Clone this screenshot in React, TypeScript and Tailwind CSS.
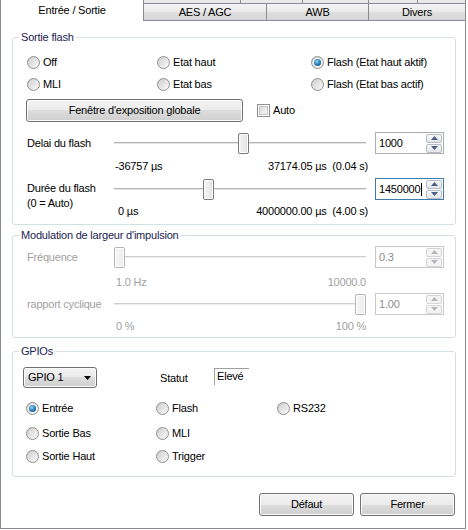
import React from 'react';

const btnBg =
  'bg-[linear-gradient(#f2f2f2,#ebebeb_50%,#dddddd_50%,#cfcfcf)] shadow-[inset_0_0_0_1px_#fbfbfb]';

function Radio({ label, checked = false }: { label: string; checked?: boolean }) {
  return (
    <div className="flex items-center h-[13px]">
      <span className="w-[13px] h-[13px] shrink-0 rounded-full border border-[#8e8f8f] bg-[linear-gradient(135deg,#cdcdcd,#fbfbfb)] flex items-center justify-center">
        {checked && (
          <span className="w-[7px] h-[7px] rounded-full bg-[radial-gradient(circle_at_40%_35%,#8ad2f7,#1d6fa8_60%,#0b4d80)] shadow-[0_0_0_1px_#f6f6f6]" />
        )}
      </span>
      <span className="ml-[3px] whitespace-nowrap">{label}</span>
    </div>
  );
}

function Group({ title, className = '', children }: { title: string; className?: string; children: React.ReactNode }) {
  return (
    <fieldset className={`border border-[#d5dfe5] rounded-[3px] ${className}`}>
      <legend className="ml-[6px] px-[2px] text-[#1b2350]">{title}</legend>
      {children}
    </fieldset>
  );
}

function Slider({ pos, disabled = false }: { pos: string; disabled?: boolean }) {
  return (
    <div className="relative w-[252px] h-[22px] flex items-center">
      <div className={`w-full h-[2px] border-t ${disabled ? 'border-[#cfcfcf] bg-[#eeeeee]' : 'border-[#b4b4b4] bg-[#e4e4e4]'}`} />
      <div
        className={`absolute top-[1px] ${pos} w-[11px] h-[21px] rounded-[2px] border ${
          disabled
            ? 'border-[#b5b5b5] bg-[linear-gradient(90deg,#f7f7f7,#ececec)]'
            : 'border-[#7a7a7a] bg-[linear-gradient(90deg,#f6f6f6,#e2e2e2)]'
        } shadow-[inset_0_0_0_1px_#ffffff]`}
      />
    </div>
  );
}

function SpinBtn({ up, disabled }: { up?: boolean; disabled?: boolean }) {
  return (
    <div
      className={`w-[16px] h-[9px] rounded-[2px] border flex items-center justify-center ${
        disabled ? 'border-[#d2d5d9] bg-[#f4f4f4]' : 'border-[#b6bcc6] bg-[linear-gradient(#f7f7f7,#e3e5e8)]'
      }`}
    >
      <svg width="7" height="4" viewBox="0 0 7 4">
        <path d={up ? 'M0 4h7L3.5 0z' : 'M0 0h7L3.5 4z'} fill={disabled ? '#b8b8b8' : '#4a5f85'} />
      </svg>
    </div>
  );
}

function Spin({ value, disabled = false, focused = false }: { value: string; disabled?: boolean; focused?: boolean }) {
  return (
    <div
      className={`ml-[9px] w-[69px] h-[22px] border bg-white flex items-center ${
        focused ? 'border-[#3d7bad]' : disabled ? 'border-[#c9c9c9]' : 'border-[#abadb3]'
      }`}
    >
      <span className={`flex-1 pl-[3px] flex items-center ${disabled ? 'text-[#8d8d8d]' : ''}`}>
        {value}
        {focused && <span className="inline-block w-[1px] h-[13px] bg-black ml-[1px]" />}
      </span>
      <div className="flex flex-col gap-[1px] pr-[1px]">
        <SpinBtn up disabled={disabled} />
        <SpinBtn disabled={disabled} />
      </div>
    </div>
  );
}

export default function App() {
  return (
    <div className="w-[468px] h-[530px] bg-white text-black text-[11px] leading-[13px] tracking-[-0.2px] font-['Liberation_Sans',Arial,sans-serif] overflow-hidden">
      {/* Tabs */}
      <div className="flex h-[21px]">
        <div className="w-[144px] border-x border-[#898c95] bg-white flex items-center justify-center">Entrée / Sortie</div>
        <div className="w-[322px] flex flex-col">
          <div className="flex h-[3px]">
            <div className="w-[97px] border-r border-[#898c95] bg-[#e9e9e9]" />
            <div className="w-[62px] border-r border-[#898c95] bg-[#e9e9e9]" />
            <div className="w-[66px] border-r border-[#898c95] bg-[#e9e9e9]" />
            <div className="w-[49px] border-r border-[#898c95] bg-[#e9e9e9]" />
            <div className="w-[48px] border-r border-[#898c95] bg-[#e9e9e9]" />
          </div>
          <div className="flex h-[18px] border-y border-[#898c95]">
            <div className="w-[123px] border-r border-[#898c95] bg-[linear-gradient(#f3f3f3,#ebebeb_45%,#dedede_55%,#d6d6d6)] flex items-center justify-center">AES / AGC</div>
            <div className="w-[102px] border-r border-[#898c95] bg-[linear-gradient(#f3f3f3,#ebebeb_45%,#dedede_55%,#d6d6d6)] flex items-center justify-center">AWB</div>
            <div className="w-[97px] border-r border-[#898c95] bg-[linear-gradient(#f3f3f3,#ebebeb_45%,#dedede_55%,#d6d6d6)] flex items-center justify-center">Divers</div>
          </div>
        </div>
      </div>

      {/* Page */}
      <div className="w-[466px] h-[508px] border-x border-b border-[#898c95] pt-[10px] pl-[11px] pr-[9px] flex flex-col">
        <Group title="Sortie flash">
          <div className="pl-[14px] pt-[12px] pb-[6px]">
            <div className="grid grid-cols-[130px_154px_1fr] gap-y-[9px]">
              <Radio label="Off" />
              <Radio label="Etat haut" />
              <Radio label="Flash (Etat haut aktif)" checked />
              <Radio label="MLI" />
              <Radio label="Etat bas" />
              <Radio label="Flash (Etat bas actif)" />
            </div>
            <div className="flex items-center mt-[8px]">
              <div className={`-ml-[1px] w-[217px] h-[23px] rounded-[3px] border border-[#707070] ${btnBg} flex items-center justify-center`}>
                Fenêtre d'exposition globale
              </div>
              <div className="ml-[14px] w-[13px] h-[13px] border border-[#8e8f8f] bg-white p-[1px]">
                <div className="w-full h-full border border-[#c6c6c6] bg-[linear-gradient(135deg,#d9d9d9,#f8f8f8)]" />
              </div>
              <span className="ml-[3px]">Auto</span>
            </div>

            <div className="flex mt-[10px]">
              <div className="w-[87px] h-[22px] flex items-center">Delai du flash</div>
              <div className="flex flex-col">
                <div className="flex items-center h-[22px]">
                  <Slider pos="left-[124px]" />
                  <Spin value="1000" />
                </div>
                <div className="flex justify-between w-[254px] mt-[6px] pl-[1px] whitespace-pre">
                  <span>-36757 µs</span>
                  <span>37174.05 µs  (0.04 s)</span>
                </div>
              </div>
            </div>

            <div className="flex mt-[5px]">
              <div className="w-[87px] pt-[3px] leading-[15px]">
                Durée du flash
                <br />
                (0 = Auto)
              </div>
              <div className="flex flex-col">
                <div className="flex items-center h-[22px]">
                  <Slider pos="left-[89px]" />
                  <Spin value="1450000" focused />
                </div>
                <div className="flex justify-between w-[254px] mt-[5px] pl-[4px] whitespace-pre">
                  <span>0 µs</span>
                  <span>4000000.00 µs  (4.00 s)</span>
                </div>
              </div>
            </div>
          </div>
        </Group>

        <Group title="Modulation de largeur d'impulsion" className="mt-[4px]">
          <div className="pl-[14px] pt-[4px] pb-[4px] text-[#a0a0a0]">
            <div className="flex">
              <div className="w-[87px] h-[22px] flex items-center">Fréquence</div>
              <div className="flex flex-col">
                <div className="flex items-center h-[22px]">
                  <Slider pos="left-[0px]" disabled />
                  <Spin value="0.3" disabled />
                </div>
                <div className="flex justify-between w-[252px] mt-[8px] pl-[2px] whitespace-pre">
                  <span>1.0 Hz</span>
                  <span>10000.0</span>
                </div>
              </div>
            </div>
            <div className="flex mt-[4px]">
              <div className="w-[87px] h-[22px] flex items-center">rapport cyclique</div>
              <div className="flex flex-col">
                <div className="flex items-center h-[22px]">
                  <Slider pos="left-[241px]" disabled />
                  <Spin value="1.00" disabled />
                </div>
                <div className="flex justify-between w-[252px] mt-[5px] pl-[2px] whitespace-pre">
                  <span>0 %</span>
                  <span>100 %</span>
                </div>
              </div>
            </div>
          </div>
        </Group>

        <Group title="GPIOs" className="mt-[7px]">
          <div className="pl-[13px] pt-[9px] pb-[13px]">
            <div className="flex items-center h-[21px]">
              <div className={`-ml-[3px] w-[74px] h-[21px] rounded-[3px] border border-[#707070] ${btnBg} flex items-center justify-between pl-[4px] pr-[5px]`}>
                <span>GPIO 1</span>
                <svg width="7" height="4" viewBox="0 0 7 4">
                  <path d="M0 0h7L3.5 4z" fill="#000" />
                </svg>
              </div>
              <span className="ml-[63px] w-[54px] pt-[2px]">Statut</span>
              <div className="self-start mt-[1px] w-[35px] h-[17px] border-t border-l border-[#a0a0a0] pl-[2px] pt-[1px]">Elevé</div>
            </div>
            <div className="grid grid-cols-[130px_121px_1fr] mt-[14px]">
              <Radio label="Entrée" checked />
              <Radio label="Flash" />
              <Radio label="RS232" />
              <div className="mt-[12px]"><Radio label="Sortie Bas" /></div>
              <div className="mt-[12px]"><Radio label="MLI" /></div>
              <div />
              <div className="mt-[10px]"><Radio label="Sortie Haut" /></div>
              <div className="mt-[10px]"><Radio label="Trigger" /></div>
              <div />
            </div>
          </div>
        </Group>

        <div className="flex justify-end gap-[6px] mt-[16px] mr-[1px]">
          <div className={`w-[95px] h-[23px] rounded-[3px] border border-[#707070] ${btnBg} flex items-center justify-center`}>Défaut</div>
          <div className={`w-[95px] h-[23px] rounded-[3px] border border-[#707070] ${btnBg} flex items-center justify-center`}>Fermer</div>
        </div>
      </div>
    </div>
  );
}
